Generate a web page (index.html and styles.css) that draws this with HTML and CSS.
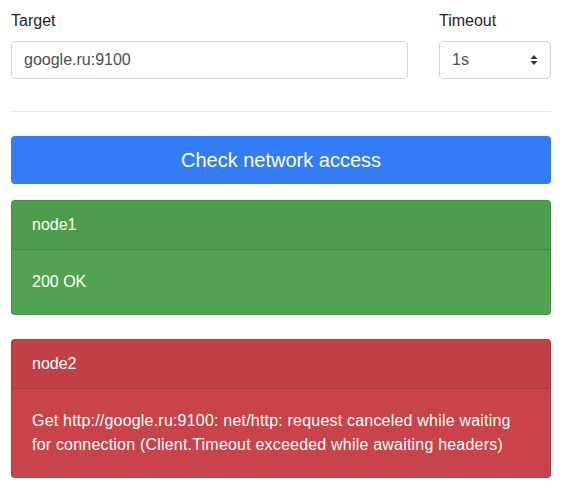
FILE: index.html
```html
<!DOCTYPE html>
<html>
<head>
<meta charset="utf-8">
<link rel="stylesheet" href="styles.css">
</head>
<body>
<div class="container">
  <div class="form-row">
    <div class="field field-target">
      <label class="label">Target</label>
      <div class="input">google.ru:9100</div>
    </div>
    <div class="field field-timeout">
      <label class="label">Timeout</label>
      <div class="select">
        <span>1s</span>
        <svg class="arrows" width="8" height="12" viewBox="0 0 8 12"><path d="M4 1 L7.5 5 H0.5 Z M4 11 L7.5 7 H0.5 Z" fill="#333"/></svg>
      </div>
    </div>
  </div>
  <hr class="divider">
  <div class="btn">Check network access</div>
  <div class="card card-ok">
    <div class="card-header">node1</div>
    <div class="card-body">200 OK</div>
  </div>
  <div class="card card-err">
    <div class="card-header">node2</div>
    <div class="card-body card-body-wide">Get http://google.ru:9100: net/http: request canceled while waiting for connection (Client.Timeout exceeded while awaiting headers)</div>
  </div>
</div>
</body>
</html>
```
FILE: styles.css
```css
html, body { margin: 0; padding: 0; background: #fff; }
body {
  font-family: "Liberation Sans", Arial, sans-serif;
  font-size: 16px;
  line-height: 24px;
  color: #212529;
}
.container { padding: 9px 13px 0 11px; width: 540px; }
.form-row { display: flex; gap: 31px; }
.field-target { flex: 1; }
.field-timeout { width: 112px; }
.label { display: block; margin-bottom: 8px; font-size: 16px; }
.input, .select {
  box-sizing: border-box;
  height: 38px;
  border: 1px solid #ced4da;
  border-radius: 4px;
  padding: 6px 12px;
  color: #495057;
  font-size: 16px;
  line-height: 24px;
}
.select { display: flex; align-items: center; justify-content: space-between; padding-right: 12px; }
.arrows { display: block; }
.divider {
  border: 0;
  border-top: 1px solid rgba(0,0,0,.1);
  margin: 32px 0 24px;
}
.btn {
  box-sizing: border-box;
  height: 48px;
  background: #337cf6;
  color: #fff;
  border-radius: 4px;
  font-size: 20px;
  line-height: 48px;
  text-align: center;
  margin-bottom: 16px;
}
.card {
  border: 1px solid rgba(0,0,0,.125);
  border-radius: 4px;
  color: #fff;
  margin-bottom: 24px;
  overflow: hidden;
}
.card-ok { background: #51a351; }
.card-err { background: #c8434a; }
.card-header {
  padding: 12px 20px;
  background: rgba(0,0,0,.03);
  border-bottom: 1px solid rgba(0,0,0,.125);
}
.card-body { padding: 20px; }
.card-body-wide { letter-spacing: 0.2px; }
```
